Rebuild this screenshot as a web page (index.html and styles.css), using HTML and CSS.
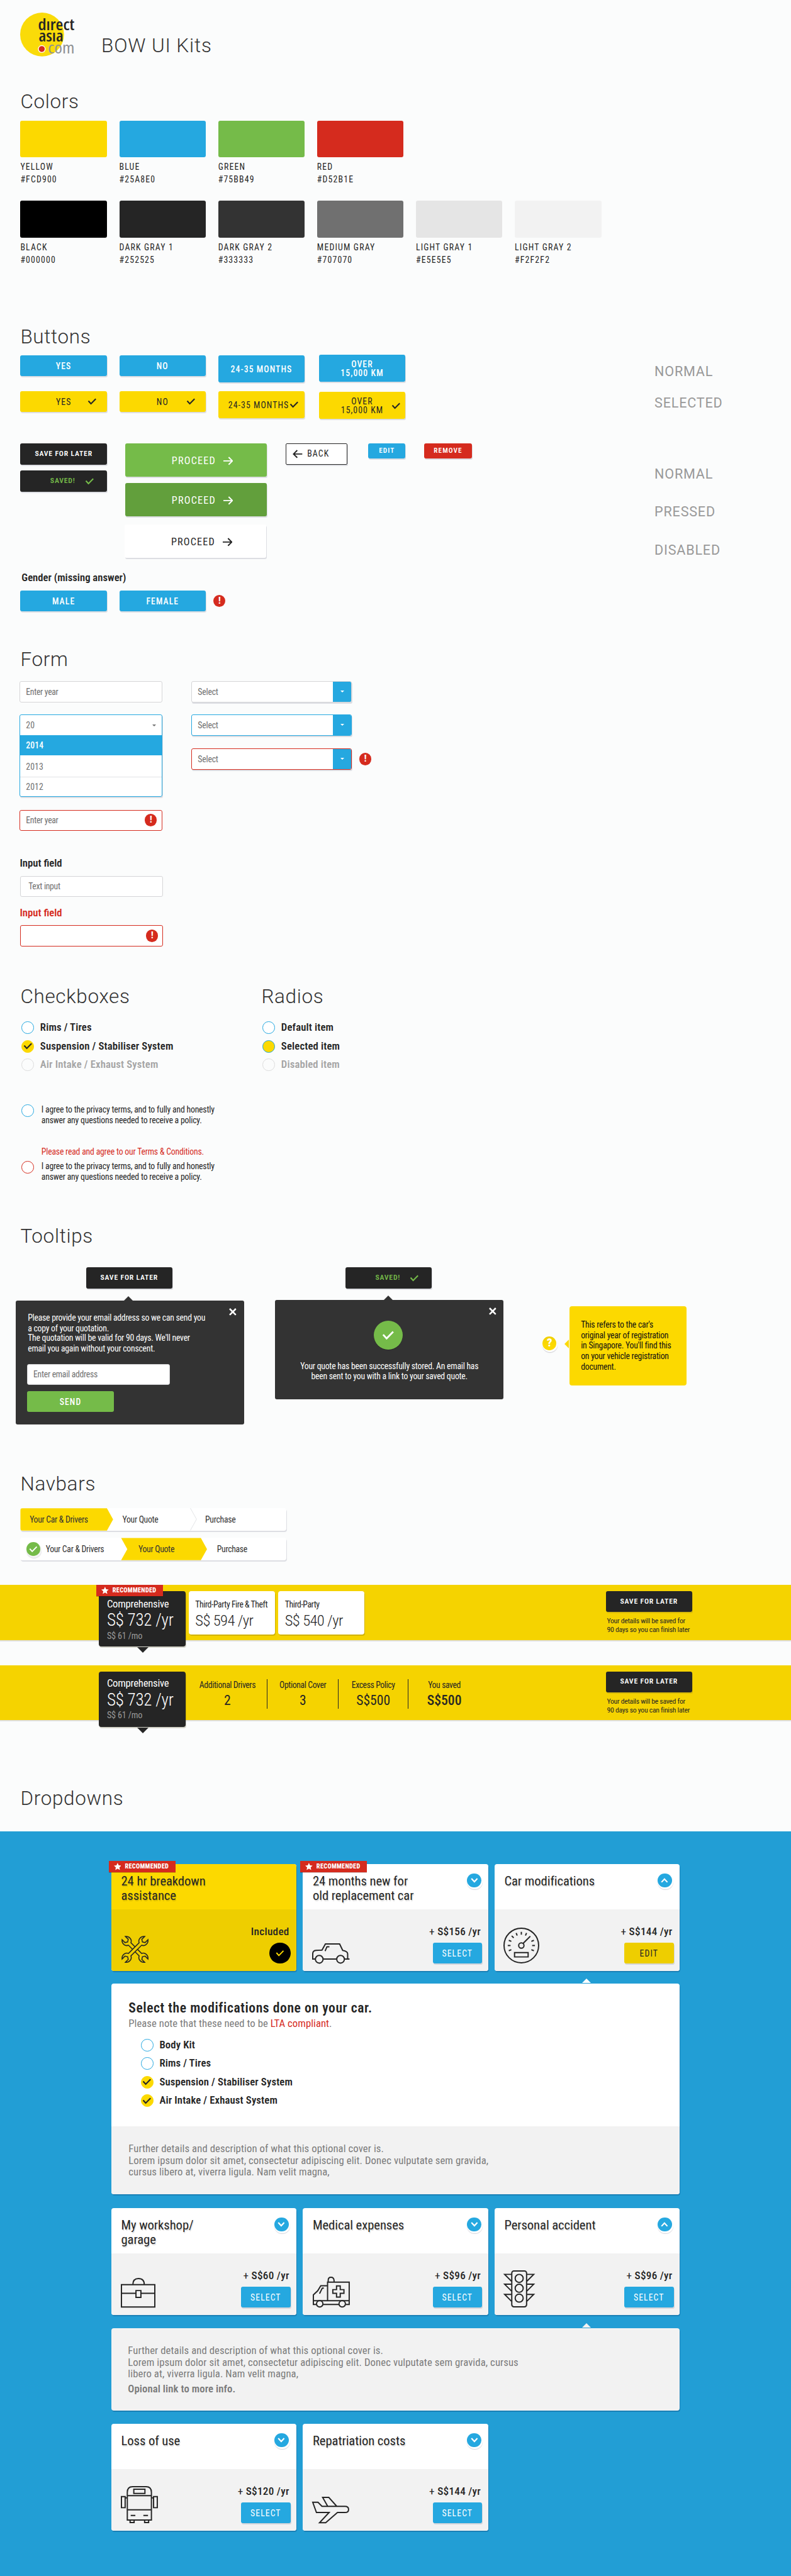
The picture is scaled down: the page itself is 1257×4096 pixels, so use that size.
FILE: index.html
```html
<!DOCTYPE html>
<html lang="en">
<head>
<meta charset="utf-8">
<title>BOW UI Kits</title>
<link rel="stylesheet" href="styles.css">
</head>
<body>
<svg class="defs" width="0" height="0">
  <symbol id="check" viewBox="0 0 16 12"><path d="M1.5 5 L6 10 L14.5 1.3" fill="none" stroke="currentColor" stroke-width="2.3"/></symbol>
  <symbol id="arrow" viewBox="0 0 16 14"><path d="M0 7 H14 M8.5 1 L14.5 7 L8.5 13" fill="none" stroke="currentColor" stroke-width="2"/></symbol>
  <symbol id="star" viewBox="0 0 24 24"><path d="M12 0 L15.6 8.2 L24 9 L17.7 15 L19.5 23.5 L12 19 L4.5 23.5 L6.3 15 L0 9 L8.4 8.2 Z" fill="currentColor"/></symbol>
  <symbol id="cross" viewBox="0 0 12 12"><path d="M1 1 L11 11 M11 1 L1 11" stroke="currentColor" stroke-width="2.6"/></symbol>
  <symbol id="down" viewBox="0 0 12 8"><path d="M1.2 1 L6 6.2 L10.800 1" fill="none" stroke="currentColor" stroke-width="2.2"/></symbol>
</svg>

<main class="kit">
  <header class="top">
    <svg class="logo" width="92" height="74" viewBox="0 0 92 74">
      <circle cx="35.500" cy="35.500" r="35.500" fill="#fadb09"/>
      <text class="logo-word" x="29" y="29" textLength="59" lengthAdjust="spacingAndGlyphs">dırect</text>
      <text class="logo-word" x="30" y="47" textLength="40" lengthAdjust="spacingAndGlyphs">asıa</text>
      <circle cx="35" cy="59" r="6.200" fill="#fff"/>
      <circle cx="35" cy="59" r="4.800" fill="#d52b1e"/>
      <text class="logo-word logo-com" x="45" y="66" textLength="43" lengthAdjust="spacingAndGlyphs">com</text>
    </svg>
    <h1>BOW UI Kits</h1>
  </header>

  <section class="colors">
    <h2>Colors</h2>
    <div class="swatches">
      <div class="swatch"><i class="c-yellow"></i>YELLOW<br>#FCD900</div>
      <div class="swatch"><i class="c-blue"></i>BLUE<br>#25A8E0</div>
      <div class="swatch"><i class="c-green"></i>GREEN<br>#75BB49</div>
      <div class="swatch"><i class="c-red"></i>RED<br>#D52B1E</div>
    </div>
    <div class="swatches">
      <div class="swatch"><i class="c-black"></i>BLACK<br>#000000</div>
      <div class="swatch"><i class="c-dark1"></i>DARK GRAY 1<br>#252525</div>
      <div class="swatch"><i class="c-dark2"></i>DARK GRAY 2<br>#333333</div>
      <div class="swatch"><i class="c-mid"></i>MEDIUM GRAY<br>#707070</div>
      <div class="swatch"><i class="c-light1"></i>LIGHT GRAY 1<br>#E5E5E5</div>
      <div class="swatch"><i class="c-light2"></i>LIGHT GRAY 2<br>#F2F2F2</div>
    </div>
  </section>

  <section class="buttons">
    <h2>Buttons</h2>
    <div class="buttons-body">
      <div class="button-rows">
        <div class="brow brow-normal">
          <span class="btn">YES</span><span class="btn">NO</span><span class="btn tall">24-35 MONTHS</span><span class="btn tall two">OVER<br>15,000 KM</span>
        </div>
        <div class="brow brow-selected">
          <span class="btn on">YES<svg class="tick"><use href="#check"/></svg></span><span class="btn on">NO<svg class="tick"><use href="#check"/></svg></span><span class="btn on tall months">24-35 MONTHS<svg class="tick"><use href="#check"/></svg></span><span class="btn on tall two">OVER<br>15,000 KM<svg class="tick"><use href="#check"/></svg></span>
        </div>
        <div class="brow brow-actions">
          <div class="stack">
            <span class="btn dark">SAVE FOR LATER</span>
            <span class="btn dark saved">SAVED!<svg class="tick"><use href="#check"/></svg></span>
          </div>
          <div class="stack proceeds">
            <span class="btn proceed">PROCEED<svg class="arrow"><use href="#arrow"/></svg></span>
            <span class="btn proceed pressed">PROCEED<svg class="arrow"><use href="#arrow"/></svg></span>
            <span class="btn proceed disabled">PROCEED<svg class="arrow"><use href="#arrow"/></svg></span>
          </div>
          <span class="btn back"><svg class="arrow flip"><use href="#arrow"/></svg>BACK</span>
          <span class="btn small edit">EDIT</span>
          <span class="btn small remove">REMOVE</span>
        </div>
        <div class="label gender">Gender (missing answer)</div>
        <div class="brow gender-row">
          <span class="btn">MALE</span><span class="btn">FEMALE</span><b class="alert">!</b>
        </div>
      </div>
      <div class="states">
        <span>NORMAL</span><span>SELECTED</span><span>NORMAL</span><span>PRESSED</span><span>DISABLED</span>
      </div>
    </div>
  </section>

  <section class="form">
    <h2>Form</h2>
    <div class="form-body">
      <div class="form-col">
        <div class="input">Enter year</div>
        <div class="combo">
          <div class="combo-head">20<i class="caret"></i></div>
          <div class="combo-item active">2014</div>
          <div class="combo-item mid">2013</div>
          <div class="combo-item">2012</div>
        </div>
        <div class="input error">Enter year<b class="alert">!</b></div>
        <div class="label field-label">Input field</div>
        <div class="input inset">Text input</div>
        <div class="label field-label red">Input field</div>
        <div class="input inset error"><b class="alert">!</b></div>
      </div>
      <div class="form-col selects">
        <div class="select"><span>Select</span><em><i class="caret"></i></em></div>
        <div class="select focus"><span>Select</span><em><i class="caret"></i></em></div>
        <div class="select-row"><div class="select error"><span>Select</span><em><i class="caret"></i></em></div><b class="alert">!</b></div>
      </div>
    </div>
  </section>

  <section class="choices">
    <div class="choice-cols">
      <div class="choice-col">
        <h2>Checkboxes</h2>
        <div class="options">
          <div class="option"><i class="dot"></i>Rims / Tires</div>
          <div class="option"><i class="dot checked"><svg><use href="#check"/></svg></i>Suspension / Stabiliser System</div>
          <div class="option off"><i class="dot"></i>Air Intake / Exhaust System</div>
        </div>
      </div>
      <div class="choice-col">
        <h2>Radios</h2>
        <div class="options">
          <div class="option"><i class="dot"></i>Default item</div>
          <div class="option"><i class="dot filled"></i>Selected item</div>
          <div class="option off"><i class="dot"></i>Disabled item</div>
        </div>
      </div>
    </div>
    <div class="agree"><i class="dot"></i><p>I agree to the privacy terms, and to fully and honestly<br>answer any questions needed to receive a policy.</p></div>
    <p class="agree-error">Please read and agree to our Terms &amp; Conditions.</p>
    <div class="agree second"><i class="dot wrong"></i><p>I agree to the privacy terms, and to fully and honestly<br>answer any questions needed to receive a policy.</p></div>
  </section>

  <section class="tooltips">
    <h2>Tooltips</h2>
    <div class="tip-row">
      <div class="tip-col">
        <span class="btn dark tip-btn">SAVE FOR LATER</span>
        <div class="tip">
          <svg class="close"><use href="#cross"/></svg>
          <p>Please provide your email address so we can send you<br>a copy of your quotation.</p>
          <p class="tight">The quotation will be valid for 90 days. We'll never<br>email you again without your conscent.</p>
          <div class="input email">Enter email address</div>
          <span class="btn send">SEND</span>
        </div>
      </div>
      <div class="tip-col">
        <span class="btn dark saved tip-btn">SAVED!<svg class="tick"><use href="#check"/></svg></span>
        <div class="tip success">
          <svg class="close"><use href="#cross"/></svg>
          <i class="big-check"><svg><use href="#check"/></svg></i>
          <p>Your quote has been successfully stored. An email has<br>been sent to you with a link to your saved quote.</p>
        </div>
      </div>
      <div class="help">
        <b class="question">?</b>
        <p class="bubble">This refers to the car's<br>original year of registration<br>in Singapore. You'll find this<br>on your vehicle registration<br>document.</p>
      </div>
    </div>
  </section>

  <section class="navbars">
    <h2>Navbars</h2>
    <div class="nav">
      <span class="step current first">Your Car &amp; Drivers</span>
      <span class="step second-step">Your Quote<svg class="sep" width="12" height="36"><path d="M.5 0 L10.500 18 L.5 36" fill="none" stroke="#e2e3e5"/></svg></span>
      <span class="step third">Purchase</span>
    </div>
    <div class="nav nav2">
      <span class="step done"><i class="done-dot"><svg><use href="#check"/></svg></i>Your Car &amp; Drivers</span>
      <span class="step current middle">Your Quote</span>
      <span class="step third">Purchase</span>
    </div>
    <div class="bar">
      <div class="plan chosen"><span class="ribbon"><svg><use href="#star"/></svg>RECOMMENDED</span><p class="plan-name">Comprehensive</p><p class="price">S$ 732 /yr</p><p class="month">S$ 61 /mo</p></div>
      <div class="plan"><p class="plan-name">Third-Party Fire &amp; Theft</p><p class="price">S$ 594 /yr</p></div>
      <div class="plan"><p class="plan-name">Third-Party</p><p class="price">S$ 540 /yr</p></div>
      <div class="bar-side"><span class="btn dark">SAVE FOR LATER</span><p>Your details will be saved for<br>90 days so you can finish later</p></div>
    </div>
    <div class="bar bar2">
      <div class="plan chosen"><p class="plan-name">Comprehensive</p><p class="price">S$ 732 /yr</p><p class="month">S$ 61 /mo</p></div>
      <div class="stats">
        <div class="stat s1"><p>Additional Drivers</p><b>2</b></div>
        <div class="stat s2"><p>Optional Cover</p><b>3</b></div>
        <div class="stat s3"><p>Excess Policy</p><b>S$500</b></div>
        <div class="stat s4"><p>You saved</p><b>S$500</b></div>
      </div>
      <div class="bar-side"><span class="btn dark">SAVE FOR LATER</span><p>Your details will be saved for<br>90 days so you can finish later</p></div>
    </div>
  </section>

  <section class="dropdowns"><h2>Dropdowns</h2></section>

  <div class="covers">
    <div class="cards">
      <article class="card included">
        <span class="ribbon"><svg><use href="#star"/></svg>RECOMMENDED</span>
        <div class="card-top"><h3>24 hr breakdown<br>assistance</h3></div>
        <div class="card-bottom">
          <svg class="icon" width="46" height="46" viewBox="-23 -23 46 46"><g class="wrench" transform="rotate(-45) scale(.94)"><path d="M-3 -13 C-8.500 -15.500 -9.500 -23 -4 -27.500 V-20.500 L0 -18 L4 -20.500 V-27.500 C9.500 -23 8.500 -15.500 3 -13 V13 C8.500 15.500 9.500 23 4 27.500 V20.500 L0 18 L-4 20.500 V27.500 C-9.500 23 -8.500 15.500 -3 13 Z"/></g><g class="wrench" transform="rotate(45) scale(.94)"><path d="M-3 -13 C-8.500 -15.500 -9.500 -23 -4 -27.500 V-20.500 L0 -18 L4 -20.500 V-27.500 C9.500 -23 8.500 -15.500 3 -13 V13 C8.500 15.500 9.500 23 4 27.500 V20.500 L0 18 L-4 20.500 V27.500 C-9.500 23 -8.500 15.500 -3 13 Z"/></g></svg>
          <div class="offer"><b>Included</b><i class="black-check"><svg><use href="#check"/></svg></i></div>
        </div>
      </article>
      <article class="card">
        <span class="ribbon"><svg><use href="#star"/></svg>RECOMMENDED</span>
        <div class="card-top"><h3>24 months new for<br>old replacement car</h3><i class="toggle"><svg><use href="#down"/></svg></i></div>
        <div class="card-bottom">
          <svg class="icon" width="61" height="33" viewBox="0 0 61 33"><path d="M5 25.500 H1 V17 Q1 12 6 11.500 L16 11 L21.500 1 H44.500 L49.500 11.500 Q57.500 13 57.500 17 V25.500 M18 25.500 H39.500 M52.500 25.500 H60.500 M21 12.500 L24 5.500 H28"/><circle cx="11.500" cy="25.800" r="6.200"/><circle cx="46" cy="25.800" r="6.200"/></svg>
          <div class="offer"><b><span>+</span> S$156 /yr</b><span class="btn pick">SELECT</span></div>
        </div>
      </article>
      <article class="card">
        <div class="card-top"><h3>Car modifications</h3><i class="toggle up"><svg><use href="#down"/></svg></i></div>
        <div class="card-bottom">
          <svg class="icon" width="58" height="58" viewBox="-29 -29 58 58"><circle r="28"/><circle r="4.300" cx="0" cy="0"/><path d="M3 -3.500 L14.500 -15 M-11 11.500 H11 V18.500 H-11 Z"/><path d="M-22 0 H-17.500 M22 0 H17.500 M0 -22 V-17.500 M-15.600 -15.600 L-12.400 -12.400 M-20.300 -8.400 L-16.200 -6.700 M20.300 -8.400 L16.200 -6.700 M-8.400 -20.300 L-6.700 -16.200 M8.400 -20.300 L6.700 -16.200 M-20.300 8.400 L-16.200 6.700 M20.300 8.400 L16.200 6.700"/></svg>
          <div class="offer"><b><span>+</span> S$144 /yr</b><span class="btn pick gold">EDIT</span></div>
        </div>
      </article>
    </div>

    <div class="panel mods">
      <div class="panel-main">
        <h4>Select the modifications done on your car.</h4>
        <p class="panel-note">Please note that these need to be <span>LTA compliant</span>.</p>
        <div class="options">
          <div class="option"><i class="dot"></i>Body Kit</div>
          <div class="option"><i class="dot"></i>Rims / Tires</div>
          <div class="option"><i class="dot checked"><svg><use href="#check"/></svg></i>Suspension / Stabiliser System</div>
          <div class="option"><i class="dot checked"><svg><use href="#check"/></svg></i>Air Intake / Exhaust System</div>
        </div>
      </div>
      <p class="panel-foot">Further details and description of what this optional cover is.<br>Lorem ipsum dolor sit amet, consectetur adipiscing elit. Donec vulputate sem gravida,<br>cursus libero at, viverra ligula. Nam velit magna,</p>
    </div>

    <div class="cards cards2">
      <article class="card">
        <div class="card-top"><h3>My workshop/<br>garage</h3><i class="toggle"><svg><use href="#down"/></svg></i></div>
        <div class="card-bottom">
          <svg class="icon" width="56" height="48" viewBox="0 0 56 48"><path d="M1 11 H55 V47 H1 Z M1 25 H24 M33 25 H55 M24.500 20.500 H32.500 V31.500 H24.500 Z M19.500 11 C19.500 4 23 1 28.500 1 S38 4 38 11"/></svg>
          <div class="offer"><b><span>+</span> S$60 /yr</b><span class="btn pick">SELECT</span></div>
        </div>
      </article>
      <article class="card">
        <div class="card-top"><h3>Medical expenses</h3><i class="toggle"><svg><use href="#down"/></svg></i></div>
        <div class="card-bottom">
          <svg class="icon" width="61" height="50" viewBox="0 0 61 50"><path d="M25 39 V9 H60 V45 H54.500 M43 45 H18 M6.500 45 H2 V29.500 L9 23 L14 14.800 H25 M2 39 H60 M26 9 V6 Q26 1 30.500 1 T35.500 6 V9 M19 18.500 H16.500 L12 27.500 M39.500 15 H45.500 V21 H51.500 V27 H45.500 V33 H39.500 V27 H33.500 V21 H39.500 Z"/><circle cx="12.300" cy="44" r="5.200"/><circle cx="48.700" cy="44" r="5.200"/></svg>
          <div class="offer"><b><span>+</span> S$96 /yr</b><span class="btn pick">SELECT</span></div>
        </div>
      </article>
      <article class="card">
        <div class="card-top"><h3>Personal accident</h3><i class="toggle up"><svg><use href="#down"/></svg></i></div>
        <div class="card-bottom">
          <svg class="icon" width="52" height="60" viewBox="0 0 52 60"><rect x="13.500" y="1" width="24" height="58" rx="3.500"/><circle cx="25.500" cy="13" r="6.500"/><circle cx="25.500" cy="29" r="6.500"/><circle cx="25.500" cy="45" r="6.500"/><path d="M13 6.500 H2 L13 17.500 M13 22.500 H2 L13 33.500 M13 39 H2 L13 50 M38 6.500 H49 L38 17.500 M38 22.500 H49 L38 33.500 M38 39 H49 L38 50"/></svg>
          <div class="offer"><b><span>+</span> S$96 /yr</b><span class="btn pick">SELECT</span></div>
        </div>
      </article>
    </div>

    <div class="panel plain">
      <p>Further details and description of what this optional cover is.<br>Lorem ipsum dolor sit amet, consectetur adipiscing elit. Donec vulputate sem gravida, cursus<br>libero at, viverra ligula. Nam velit magna,</p>
      <p class="panel-link">Opional link to more info.</p>
    </div>

    <div class="cards">
      <article class="card">
        <div class="card-top"><h3>Loss of use</h3><i class="toggle"><svg><use href="#down"/></svg></i></div>
        <div class="card-bottom">
          <svg class="icon" width="60" height="60" viewBox="0 0 60 60"><path d="M10.500 55 V10 Q10.500 1 19 1 H41 Q49.500 1 49.500 10 V55 Z M21 5 H39 V12 H21 Z M10.500 15.500 H49.500 M10.500 38.500 H49.500 M16 47.500 H23.500 M36.500 47.500 H44 M1 17 H7 V35 H1 Z M53 17 H59 V35 H53 Z M7 19 H10.500 M49.500 19 H53 M15 55 V59 H21.500 V55 M38.500 55 V59 H45 V55"/></svg>
          <div class="offer"><b><span>+</span> S$120 /yr</b><span class="btn pick">SELECT</span></div>
        </div>
      </article>
      <article class="card">
        <div class="card-top"><h3>Repatriation costs</h3><i class="toggle"><svg><use href="#down"/></svg></i></div>
        <div class="card-bottom">
          <svg class="icon" width="60" height="43" viewBox="0 0 60 43"><path d="M1 9 H9.500 L16 15.500 H53 Q59 15.500 59 20.500 Q59 25.500 53 25.500 H41 L22 42 H12 L27.500 25.500 H7 Z M25 15 L17 1 H27 L39.500 15"/></svg>
          <div class="offer"><b><span>+</span> S$144 /yr</b><span class="btn pick">SELECT</span></div>
        </div>
      </article>
    </div>
  </div>
</main>
</body>
</html>
```
FILE: styles.css
```css
* { box-sizing: border-box; }
body { margin: 0; background: #fbfcfc; }
.kit {
  zoom: 0.98215;
  width: 1280px;
  font-family: Roboto, "Liberation Sans Narrow", sans-serif;
  font-stretch: 75%;
  font-size: 14px;
  letter-spacing: -.2px;
  color: #252525;
}
p, h1, h2, h3, h4 { margin: 0; font-weight: 400; }
i, em { font-style: normal; }
.defs { display: block; position: absolute; }
h1, h2 { font-size: 32px; line-height: 40px; font-weight: 300; font-stretch: 94%; letter-spacing: .9px; color: #333; }
h2 { letter-spacing: .7px; padding-top: 1px; height: 40px; }
section > h2, .choice-cols h2 { padding-left: 33px; }

.top { display: flex; height: 144px; padding: 20px 0 0 33px; }
.logo-word { font-family: "Open Sans", sans-serif; font-size: 25px; font-weight: 550; letter-spacing: 0; fill: #252525; }
.logo-com { fill: #8f9294; font-weight: 400; }
h1 { margin: 34px 0 0 39px; }

.colors { height: 380px; }
.swatches { display: flex; gap: 20px; padding: 11px 0 0 33px; height: 130px; box-sizing: content-box; }
.swatches + .swatches { padding-top: 0; }
.swatch { width: 140px; font-size: 14px; line-height: 20px; letter-spacing: 1.2px; text-indent: 3px; }
.swatch i { display: block; height: 60px; border-radius: 3px; margin-bottom: 6px; }
.c-yellow { background: #fcd900; }
.c-blue { background: #25a8e0; }
.c-green { background: #75bb49; }
.c-red { background: #d52b1e; }
.c-black { background: #000; }
.c-dark1 { background: #252525; }
.c-dark2 { background: #333; }
.c-mid { background: #707070; }
.c-light1 { background: #e5e5e5; }
.c-light2 { background: #f2f2f2; }

.btn {
  position: relative; display: flex; align-items: center; justify-content: center;
  width: 140px; height: 34px; padding-top: 3px; border-radius: 3px;
  background: #25a8e0; color: #fff; font-size: 14px; font-weight: 500; letter-spacing: 1.1px; line-height: 14px;
  text-align: center; box-shadow: 1px 2px 0 rgba(40, 40, 80, .14); white-space: nowrap;
}
.btn.tall { height: 44px; }
.btn.on { background: #fcd900; color: #252525; font-weight: 400; }
.tick { position: absolute; right: 17px; top: 12px; width: 15px; height: 11px; }
.months { padding-right: 9px; }
.months .tick { right: 10px; top: 17px; }
.two .tick { right: 8px; top: 18px; }
.buttons { height: 523px; }
.buttons-body { display: flex; }
.button-rows { width: 1059px; padding: 10px 0 0 33px; }
.brow { display: flex; align-items: flex-start; }
.brow-normal { height: 59px; gap: 20px; }
.brow-normal .btn { margin-top: 1px; }
.brow-normal .btn.two { margin: 0 0 0 3px; }
.brow-selected { height: 85px; gap: 20px; }
.brow-selected .two { margin: 1px 0 0 3px; }
.stack { display: flex; flex-direction: column; gap: 10px; }
.btn.dark { background: #252525; font-size: 12px; font-weight: 600; letter-spacing: .8px; padding-top: 0; }
.btn.saved { color: #75bb49; padding-right: 3px; }
.saved .tick { right: 21px; }
.proceeds { margin-left: 30px; }
.btn.proceed { width: 229px; height: 54px; padding: 3px 0 0 20px; gap: 12px; font-size: 16.500px; font-weight: 450; background: #75bb49; letter-spacing: 1.2px; }
.btn.pressed { background: #629f3c; }
.btn.disabled { background: #fff; color: #252525; font-weight: 400; margin: 3px 0 0 -1px; }
.arrow { width: 16px; height: 14px; }
.flip { transform: scaleX(-1); }
.btn.back { width: 100px; margin-left: 30px; background: #fff; border: 2px solid #252525; border-radius: 2px; color: #252525; font-weight: 400; padding: 0 18px 0 0; gap: 8px; }
.btn.small { height: 24px; font-size: 11.500px; font-weight: 600; letter-spacing: 1.1px; padding-top: 0; }
.btn.edit { width: 60px; margin-left: 34px; }
.btn.remove { width: 78px; margin-left: 30px; background: #d52b1e; }
.label { font-size: 17px; line-height: 20px; font-weight: 600; letter-spacing: 0; }
.gender { margin: 23px 0 10px 2px; }
.gender-row { gap: 20px; }
.alert { display: block; width: 20px; height: 20px; border-radius: 50%; background: #d52b1e; color: #fff; text-align: center; font-size: 14px; line-height: 20px; font-weight: 900; }
.gender-row .alert { margin: 7px 0 0 -8px; }
.states { display: flex; flex-direction: column; font-size: 22px; line-height: 30px; color: #999; font-stretch: 100%; font-weight: 400; letter-spacing: .8px; padding-top: 23px; }
.states span:nth-child(2) { margin: 20px 0 85px; }
.states span:nth-child(4) { margin: 32px 0; }

.form { height: 545px; }
.form-body { display: flex; padding: 16px 0 0 32px; gap: 47px; color: #707070; }
.form-col { width: 231px; }
.input { display: flex; align-items: center; justify-content: space-between; width: 231px; height: 34px; padding: 0 8px 0 9px; border: 1px solid #d5d5d7; border-radius: 3px; background: #fff; color: #707070; letter-spacing: -.3px; }
.input.error, .select.error { border-color: #d52b1e; }
.input.inset { margin-left: 1px; padding: 0 7px 0 12px; }
.input.inset .alert { margin-left: auto; }
.combo { height: 133px; margin: 20px 0 21px; border: 1px solid #25a8e0; border-radius: 3px; background: #fff; box-shadow: 1px 2px 0 rgba(40, 40, 80, .14); }
.combo-head, .combo-item { display: flex; align-items: center; justify-content: space-between; padding: 0 9px; height: 32px; letter-spacing: .1px; font-size: 14px; }
.combo-item { height: 31px; font-weight: 450; }
.combo-item.active { height: 33px; background: #25a8e0; color: #fff; font-weight: 500; }
.combo-item.mid { height: 35px; padding-top: 2px; border-bottom: 1px solid #e2e3e5; }
.caret { width: 0; height: 0; border: 4px solid transparent; border-top-color: currentColor; border-bottom: 0; }
.field-label { margin: 43px 0 10px; color: #252525; }
.field-label.red { margin-top: 16px; color: #d52b1e; }
.selects { display: flex; flex-direction: column; gap: 20px; }
.select { display: flex; align-items: center; width: 259px; height: 34px; border: 1px solid #d5d5d7; border-radius: 3px; background: #fff; box-shadow: 1px 2px 0 rgba(40, 40, 80, .14); padding-left: 9px; overflow: hidden; flex: none; }
.select em { display: flex; align-items: center; justify-content: center; width: 29px; height: 34px; margin-left: auto; background: #25a8e0; color: #fff; }
.select.focus { border-color: #25a8e0; }
.select-row { display: flex; align-items: center; gap: 12px; margin-top: 1px; }
.select-row .alert { flex: none; }

.choices { height: 388px; }
.choice-cols { display: flex; }
.choice-col { width: 390px; }
.options { display: flex; flex-direction: column; gap: 10px; }
.choice-cols .options { padding: 22px 0 0 35px; }
.option { display: flex; gap: 10px; height: 20px; line-height: 21px; font-size: 17px; font-weight: 600; letter-spacing: .15px; }
.off { color: #a5a5a5; }
.dot { display: flex; align-items: center; justify-content: center; flex: none; width: 20px; height: 20px; border: 1px solid #25a8e0; border-radius: 50%; background: #fff; }
.dot svg { width: 15px; height: 11px; }
.dot.checked { background: #fcd900; border-color: #fcd900; color: #252525; }
.dot.filled { background: #fcd900; }
.dot.wrong { border-color: #d52b1e; }
.off .dot { border-color: #ddd; background: transparent; }
.agree { display: flex; gap: 12px; margin: 54px 0 34px; padding-left: 35px; line-height: 17px; }
.agree-error { padding-left: 67px; line-height: 17px; color: #d52b1e; }
.agree.second { margin: 7px 0 0; }

.tooltips { height: 402px; }
.tip-row { display: flex; padding: 32px 0 0 25px; }
.tip-col { width: 370px; margin-right: 50px; }
.tip-btn { margin: 0 0 20px 114px; }
.tip { position: relative; height: 200px; padding: 19px 20px; border-radius: 3px; background: #333; color: #fff; line-height: 17px; font-weight: 450; letter-spacing: -.25px; white-space: nowrap; }
.tip::before { content: ""; position: absolute; left: 176px; top: -8px; border: 8px solid transparent; border-top: 0; border-bottom-color: #333; }
.tip .tight { margin-top: -1px; }
.close { position: absolute; right: 12px; top: 12px; width: 12px; height: 12px; }
.email { margin: 16px 0 10px -1px; font-weight: 400; }
.btn.send { margin-left: -1px; background: #75bb49; box-shadow: none; }
.tip.success { height: 160px; margin-top: -1px; padding-top: 33px; text-align: center; }
.big-check { display: flex; align-items: center; justify-content: center; width: 47px; height: 47px; margin: 0 auto 18px 140px; border-radius: 50%; background: #75bb49; box-shadow: 0 1px 0 #282828; }
.big-check svg { width: 20px; height: 15px; }
.help { display: flex; padding: 63px 0 0 13px; }
.question { display: block; width: 22px; height: 22px; margin: 49px 21px 0 0; border-radius: 50%; background: linear-gradient(#efcf05, #fcd900 60%); box-shadow: 0 0 0 1px #fff, 1px 2px 0 1px #fff, 1px 3px 1px 1px #ccccd2; color: #fff; text-align: center; font-size: 19px; line-height: 22px; font-weight: 800; }
.bubble { position: relative; width: 190px; height: 128px; padding: 21px 19px; border-radius: 4px; background: #fcd900; color: #111; line-height: 17px; letter-spacing: -.25px; white-space: nowrap; }
.bubble::before { content: ""; position: absolute; left: -8px; top: 54px; border: 8px solid transparent; border-left: 0; border-right-color: #fcd900; }

.navbars { height: 509px; }
.nav { display: flex; width: 430px; height: 36px; margin: 20px 0 12px 33px; border-radius: 4px; background: #fff; box-shadow: 1px 2px 0 rgba(40, 40, 80, .14); color: #333; letter-spacing: -.3px; }
.nav2 { margin: 0 0 40px 33px; }
.step { position: relative; display: flex; align-items: center; padding-left: 15px; }
.step.current { background: #fcd900; }
.first { width: 150px; border-radius: 4px 0 0 4px; clip-path: polygon(0 0, 140px 0, 150px 50%, 140px 100%, 0 100%); }
.second-step { width: 137px; }
.sep { position: absolute; right: 0; top: 0; }
.step.third { padding-left: 12px; }
.step.done { width: 163px; padding-left: 10px; }
.done-dot { display: flex; align-items: center; justify-content: center; width: 22px; height: 22px; margin-right: 9px; border-radius: 50%; background: #75bb49; box-shadow: 1px 2px 0 1px #f4f4f4, 1px 3px 1px 1px #dcdce0; color: #fff; }
.done-dot svg { width: 14px; height: 11px; }
.step.middle { width: 139px; padding-left: 28px; clip-path: polygon(0 0, 129px 0, 139px 50%, 129px 100%, 0 100%, 10px 50%); }
.nav2 .third { padding-left: 16px; }
.bar { display: flex; height: 89px; padding: 10px 160px 0; background: #f5d300; box-shadow: 0 2px 0 #dfdfe4; }
.bar2 { margin-top: 41px; }
.plan { position: relative; width: 140px; height: 70px; margin-right: 5px; padding: 12px 0 0 11px; border-radius: 4px; background: #fff; box-shadow: 1px 2px 0 rgba(60, 50, 0, .2); white-space: nowrap; }
.plan-name { font-size: 14px; line-height: 20px; letter-spacing: -.45px; }
.price { font-size: 25px; line-height: 32px; font-weight: 300; letter-spacing: -.6px; }
.chosen { height: 90px; padding: 11px 0 0 13px; background: #252525; color: #fff; }
.chosen::after { content: ""; position: absolute; left: 62px; bottom: -10px; border: 10px solid transparent; border-bottom: 0; border-top-color: #252525; }
.chosen .plan-name { font-size: 17px; letter-spacing: -.25px; }
.chosen .price { font-size: 27.500px; margin-top: 1px; letter-spacing: -.2px; }
.month { font-size: 14.500px; line-height: 18px; color: #999; }
.bar2 .chosen { padding-top: 9.500px; margin-right: 4px; }
.ribbon { position: absolute; left: -4px; top: -10px; display: flex; align-items: center; gap: 6px; width: 108px; height: 18px; padding-left: 8px; background: #d52b1e; color: #fff; font-size: 10.500px; font-weight: 800; letter-spacing: .3px; box-shadow: 0 1px 0 rgba(60, 0, 0, .25); }
.ribbon svg { width: 12px; height: 12px; }
.bar-side { width: 140px; margin-left: auto; font-size: 12px; line-height: 14px; font-weight: 450; letter-spacing: -.3px; }
.bar-side p { margin: 8px 0 0 2px; white-space: nowrap; }
.stats { display: flex; height: 48px; margin-top: 13px; }
.stat { text-align: center; border-right: 1px solid #252525; font-size: 14px; line-height: 20px; letter-spacing: -.4px; }
.stat b { display: block; font-size: 22px; line-height: 28px; font-weight: 400; letter-spacing: 0; }
.s1 { width: 129px; }
.s2 { width: 115px; }
.s3 { width: 113px; }
.s4 { width: 116px; border: 0; font-weight: 500; }
.s4 b { font-weight: 500; }

.dropdowns { height: 74px; }
.covers { height: 1206px; padding: 53px 180px 0; background: #229ed5; }
.cards { display: flex; gap: 10px; }
.card { position: relative; width: 300px; height: 173px; border-radius: 4px; background: #fff; box-shadow: 1px 2px 0 rgba(0, 40, 90, .25); }
.card .ribbon { top: -5px; }
.card-top { display: flex; height: 73px; padding: 15px 13px 0 16px; justify-content: space-between; }
.card h3 { padding-top: 1px; font-size: 21px; line-height: 24px; letter-spacing: -.05px; text-shadow: 1px 2px 1px rgba(0, 0, 0, .14); }
.toggle { display: flex; align-items: center; justify-content: center; width: 23px; height: 23px; border-radius: 50%; background: #25a8e0; color: #fff; box-shadow: 1px 2px 0 1px #fff, 1px 3px 1px 1px #d5d5dc; }
.card:nth-child(2) .toggle { margin-right: -2px; }
.toggle svg { width: 12px; height: 8px; }
.toggle.up svg { transform: scaleY(-1); }
.card-bottom { display: flex; justify-content: space-between; align-items: flex-end; height: 100px; padding: 0 10px 12px 15px; border-radius: 0 0 4px 4px; background: #f2f2f2; }
.included .card-top { background: #fcd900; border-radius: 4px 4px 0 0; }
.included .card-bottom { background: #eece00; }
.icon { fill: none; stroke: #252525; stroke-width: 2; overflow: visible; }
.wrench { fill: #eece00; stroke-width: 1.700; }
.offer { display: flex; flex-direction: column; align-items: flex-end; gap: 7px; }
.offer b { padding-right: 2px; font-size: 17.500px; line-height: 20px; font-weight: 550; letter-spacing: .3px; }
.offer b span { font-weight: 400; }
.btn.pick { width: 80px; font-weight: 400; font-size: 14px; }
.btn.gold { background: #eece00; color: #252525; }
.black-check { display: flex; align-items: center; justify-content: center; width: 34px; height: 34px; border-radius: 50%; background: #000; color: #fcd900; }
.black-check svg { width: 14px; height: 12px; }
.panel { position: relative; height: 342px; margin-top: 20px; border-radius: 4px; background: #fff; box-shadow: 1px 2px 0 rgba(0, 40, 90, .25); color: #7b7b7b; font-size: 17px; line-height: 19px; letter-spacing: .1px; }
.panel::before { content: ""; position: absolute; left: 762px; top: -8px; border: 8px solid transparent; border-top: 0; border-bottom-color: #fff; }
.panel-main { height: 232px; padding: 27px 28px 0; }
.panel h4 { font-size: 22px; line-height: 26px; font-weight: 600; letter-spacing: .6px; color: #252525; }
.panel-note { line-height: 24px; margin-bottom: 13px; letter-spacing: .05px; }
.panel-note span { color: #d52b1e; }
.panel .options { padding-left: 20px; color: #252525; }
.panel-foot { height: 110px; padding: 27px 28px 0; background: #f2f2f2; border-radius: 0 0 4px 4px; }
.cards2 { margin-top: 22px; }
.plain { height: 134px; margin: 21px 0; padding: 28px 27px 0; background: #f2f2f2; }
.plain::before { border-bottom-color: #f2f2f2; }
.panel-link { margin-top: 5px; font-weight: 600; }
```
